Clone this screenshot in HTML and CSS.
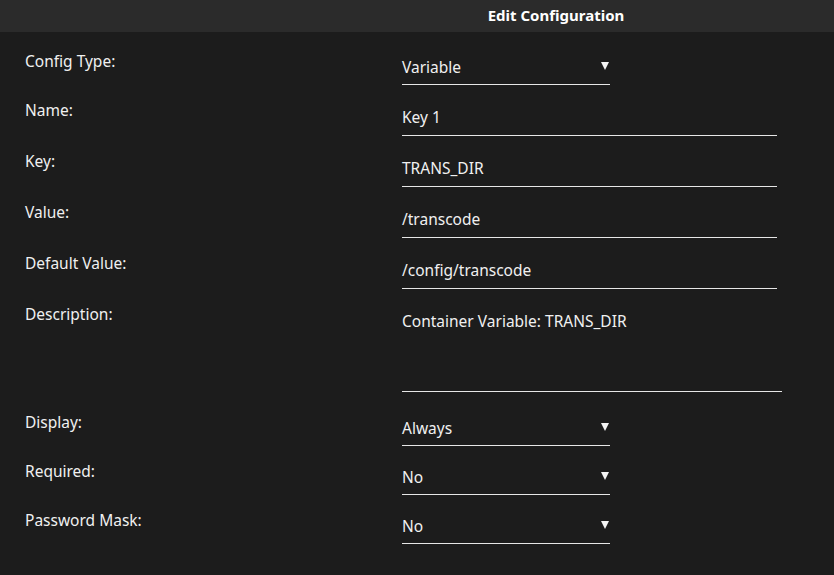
FILE: index.html
```html
<!DOCTYPE html>
<html lang="en">
<head>
<meta charset="utf-8">
<title>Edit Configuration</title>
<link rel="stylesheet" href="styles.css">
</head>
<body>
<header class="title-bar">Edit Configuration</header>
<form class="config-form">
  <div class="row">
    <label class="label">Config Type:</label>
    <div class="select"><span>Variable</span><span class="caret"></span></div>
  </div>
  <div class="row">
    <label class="label">Name:</label>
    <div class="text-input">Key 1</div>
  </div>
  <div class="row">
    <label class="label">Key:</label>
    <div class="text-input">TRANS_DIR</div>
  </div>
  <div class="row">
    <label class="label">Value:</label>
    <div class="text-input">/transcode</div>
  </div>
  <div class="row">
    <label class="label">Default Value:</label>
    <div class="text-input">/config/transcode</div>
  </div>
  <div class="row row-tall">
    <label class="label">Description:</label>
    <div class="text-area">Container Variable: TRANS_DIR</div>
  </div>
  <div class="row">
    <label class="label">Display:</label>
    <div class="select"><span>Always</span><span class="caret"></span></div>
  </div>
  <div class="row">
    <label class="label">Required:</label>
    <div class="select"><span>No</span><span class="caret"></span></div>
  </div>
  <div class="row">
    <label class="label">Password Mask:</label>
    <div class="select"><span>No</span><span class="caret"></span></div>
  </div>
</form>
</body>
</html>
```
FILE: styles.css
```css
html, body {
  margin: 0;
  padding: 0;
  background: #1c1c1c;
  color: #f0f0f0;
  font-family: "Noto Sans", "Open Sans", sans-serif;
  font-size: 15.5px;
}

.title-bar {
  height: 32px;
  line-height: 30px;
  background: #2b2b2b;
  padding-left: 278px;
  text-align: center;
  font-weight: bold;
  font-size: 15px;
  color: #ffffff;
}

.config-form {
  display: flex;
  flex-direction: column;
  gap: 15px;
  padding: 19px 0 0 25px;
}

.row {
  display: grid;
  grid-template-columns: 377px 1fr;
  align-items: start;
}

.row-tall {
  margin-bottom: 5px;
}

.label {
  line-height: 20px;
}

.select,
.text-input,
.text-area {
  line-height: 20px;
  padding-top: 6px;
  border-bottom: 1px solid #e6e6e6;
}

.select {
  width: 208px;
  padding-bottom: 7px;
  display: flex;
  justify-content: space-between;
  align-items: center;
}

/* small white down-pointing triangle */
.caret {
  width: 0;
  height: 0;
  margin-right: 1px;
  margin-top: -3px;
  border-left: 4px solid transparent;
  border-right: 4px solid transparent;
  border-top: 8px solid #f4f4f4;
}

.text-input {
  width: 375px;
  padding-top: 7px;
  padding-bottom: 8px;
}

.text-area {
  width: 380px;
  height: 80px;
  padding-top: 7px;
}
```
